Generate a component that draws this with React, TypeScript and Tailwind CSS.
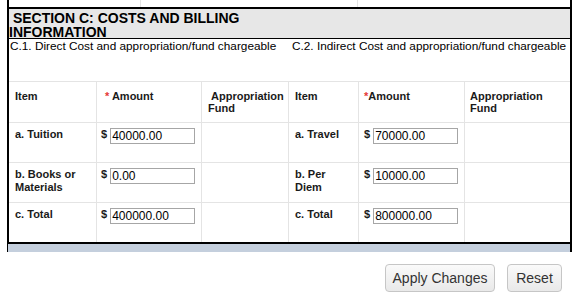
import React from 'react'

type Row = {
  left: string[]
  leftAmount: string
  right: string[]
  rightAmount: string
}

const rows: Row[] = [
  { left: ['a. Tuition'], leftAmount: '40000.00', right: ['a. Travel'], rightAmount: '70000.00' },
  { left: ['b. Books or', 'Materials'], leftAmount: '0.00', right: ['b. Per', 'Diem'], rightAmount: '10000.00' },
  { left: ['c. Total'], leftAmount: '400000.00', right: ['c. Total'], rightAmount: '800000.00' },
]

const label = 'text-[11px] font-bold leading-[13px] text-[#1a1a1a]'
const headLabel = 'text-[11px] font-bold leading-[12px] text-[#1a1a1a]'
const line = 'border-[#e4e4e4]'

function Amount({ value }: { value: string }) {
  return (
    <div className="flex items-start gap-[3px]">
      <span className={label}>$</span>
      <input
        readOnly
        value={value}
        className="h-[16px] w-[85px] border border-[#a6a6a6] bg-white px-[1px] text-[12px] leading-[14px] text-black outline-none"
      />
    </div>
  )
}

function Lines({ items }: { items: string[] }) {
  return (
    <div className={label}>
      {items.map((t) => (
        <div key={t}>{t}</div>
      ))}
    </div>
  )
}

export default function App() {
  return (
    <div className="h-[300px] w-[579px] bg-white font-['Liberation_Sans',Arial,sans-serif]">
      <div className="ml-[7px] w-[565px]">
        {/* tail of the previous section */}
        <div className="grid h-[9px] grid-cols-[132px_217px_1fr] border-x-2 border-b-2 border-black">
          <div className={`border-r ${line}`} />
          <div className={`border-r ${line}`} />
          <div />
        </div>

        {/* section header */}
        <div className="h-[30px] border-x-2 border-b border-black bg-[#e7e7e7] pt-[2px]">
          <div className="w-[282px] text-[14px] font-bold leading-[14px] text-black">
            {'\u00a0'}SECTION C: COSTS AND BILLING INFORMATION
          </div>
        </div>

        {/* body */}
        <div className="border-x-2 border-b-2 border-black">
          <div className="grid h-[42px] grid-cols-[280px_1fr] text-[11.8px] leading-[14px] text-black">
            <div className="pl-[1px]">C.1. Direct Cost and appropriation/fund chargeable</div>
            <div className="pl-[3px] whitespace-nowrap">C.2. Indirect Cost and appropriation/fund chargeable</div>
          </div>

          <div className="grid grid-cols-[88px_105px_87px_70px_106px_1fr]">
            {/* header row */}
            <div className={`h-[42px] border-y border-r ${line} pl-[6px] pt-[8px] ${headLabel}`}>Item</div>
            <div className={`h-[42px] border-y border-r ${line} pl-[8px] pt-[8px] ${headLabel}`}>
              <span className="text-[#e53935]">*</span> Amount
            </div>
            <div className={`h-[42px] border-y border-r ${line} pl-[6px] pt-[8px] indent-[3px] ${headLabel}`}>
              Appropriation Fund
            </div>
            <div className={`h-[42px] border-y border-r ${line} pl-[6px] pt-[8px] ${headLabel}`}>Item</div>
            <div className={`h-[42px] border-y border-r ${line} pl-[5px] pt-[8px] ${headLabel}`}>
              <span className="text-[#e53935]">*</span>Amount
            </div>
            <div className={`h-[42px] border-y ${line} pl-[5px] pt-[8px] ${headLabel}`}>
              <div className="w-[80px]">Appropriation Fund</div>
            </div>

            {rows.map((r, i) => {
              const last = i === rows.length - 1
              const cell = `${last ? 'h-[39px]' : 'h-[40px] border-b'} ${line} pt-[5px]`
              return (
                <React.Fragment key={i}>
                  <div className={`${cell} border-r pl-[6px]`}>
                    <Lines items={r.left} />
                  </div>
                  <div className={`${cell} border-r pl-[4px]`}>
                    <Amount value={r.leftAmount} />
                  </div>
                  <div className={`${cell} border-r`} />
                  <div className={`${cell} border-r pl-[6px]`}>
                    <Lines items={r.right} />
                  </div>
                  <div className={`${cell} border-r pl-[5px]`}>
                    <Amount value={r.rightAmount} />
                  </div>
                  <div className={cell} />
                </React.Fragment>
              )
            })}
          </div>
        </div>

        {/* footer strip */}
        <div className="h-[8px] border-l border-r-2 border-black bg-[#c4cfdd]" />
      </div>

      <div className="mt-[12px] flex justify-end gap-[12px] pr-[17px]">
        <button className="h-[28px] w-[110px] rounded-[4px] border border-[#c6c6c6] bg-gradient-to-b from-[#fafafa] to-[#e9e9e9] text-[14px] text-[#333]">
          Apply Changes
        </button>
        <button className="h-[28px] w-[55px] rounded-[4px] border border-[#c6c6c6] bg-gradient-to-b from-[#fafafa] to-[#e9e9e9] text-[14px] text-[#333]">
          Reset
        </button>
      </div>
    </div>
  )
}
